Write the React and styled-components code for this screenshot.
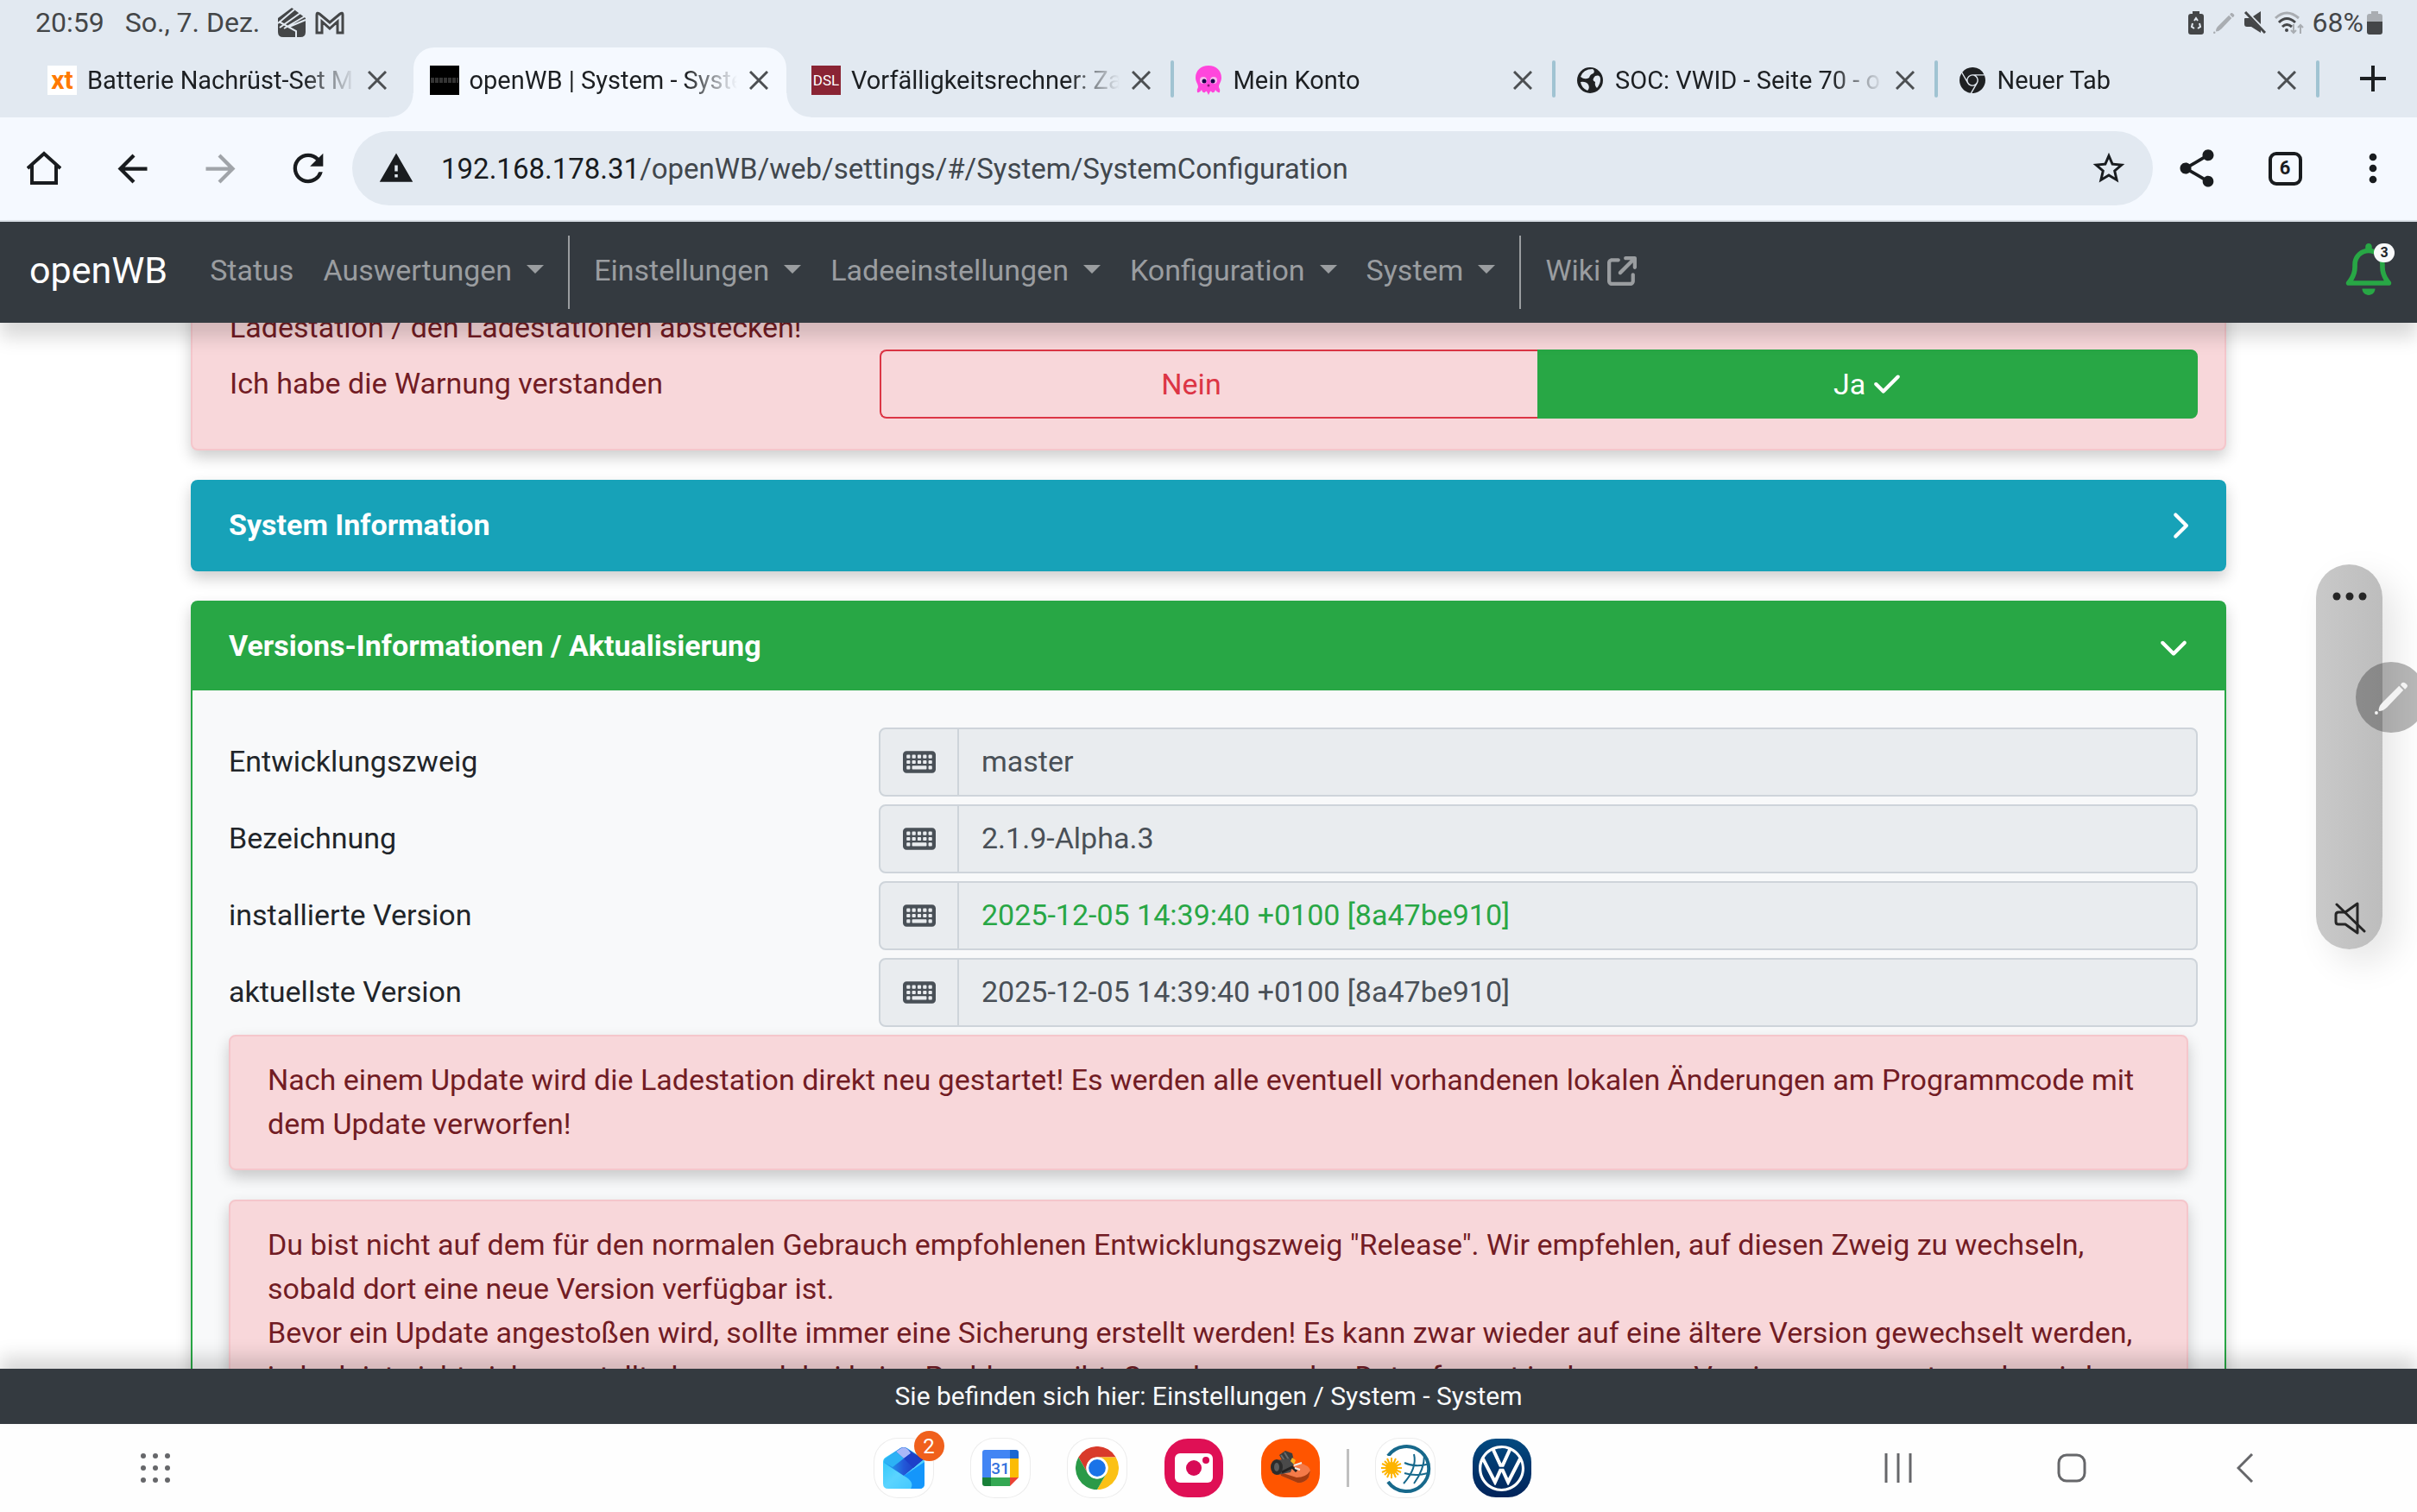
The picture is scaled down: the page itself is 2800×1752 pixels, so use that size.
import React, { useState } from "react";

import styled, { createGlobalStyle } from "styled-components";
import { MdArrowBack, MdArrowForward, MdRefresh, MdWarning, MdStarBorder, MdShare, MdMoreVert } from "react-icons/md";
import { FaCheck, FaChevronDown, FaChevronRight, FaRegBell, FaArrowUpRightFromSquare, FaKeyboard } from "react-icons/fa6";
import { SiGooglechrome, SiVolkswagen } from "react-icons/si";



const GlobalStyle = createGlobalStyle`
    * {
        box-sizing: border-box;
    }
    body {
        margin: 0;
        background: #fff;
        font-family: Roboto, "Liberation Sans", sans-serif;
        font-size: 34px;
        line-height: 51px;
        color: #212529;
    }
    button, input {
        font: inherit;
        color: inherit;
        margin: 0;
        padding: 0;
        border: none;
        background: none;
    }
    svg {
        display: block;
        flex-shrink: 0;
    }
`;

const Screen = styled.div`
    height: 100vh;
    display: flex;
    flex-direction: column;
    overflow: hidden;
`;

/* ---------- status bar ---------- */

const StatusBar = styled.div`
    height: 52px;
    padding: 0 40px 0 41px;
    display: flex;
    align-items: center;
    background: #e2e9f1;
    color: #444648;
    font-size: 32px;
`;
const StatusDate = styled.span`
    margin: 0 20px 0 24px;
`;
const StatusGroup = styled.div`
    display: flex;
    align-items: center;
    gap: 10px;
    margin-left: ${(props) => (props.$end ? "auto" : "0")};
`;
const Battery = styled.div`
    display: flex;
    align-items: center;
    gap: 4px;
`;

/* ---------- tabs ---------- */

const TabStrip = styled.div`
    height: 84px;
    padding-left: 36px;
    display: flex;
    align-items: flex-end;
    background: #e2e9f1;
`;
const Tab = styled.div`
    flex: 1 0 52px;
    min-width: 0;
    height: 81px;
    padding: 0 ${(props) => (props.$active ? "21px" : "31px")} 6px 19px;
    margin-right: ${(props) => (props.$active ? "10px" : "0")};
    flex-basis: ${(props) => (props.$active ? "42px" : "52px")};
    display: flex;
    align-items: center;
    position: relative;
    color: #1c1f22;
    background: ${(props) => (props.$active ? "#f5f9ff" : "transparent")};
    border-radius: 24px 24px 0 0;

    /* curved feet of the active tab */
    &::before, &::after {
        content: "";
        display: ${(props) => (props.$active ? "block" : "none")};
        position: absolute;
        bottom: 0;
        width: 28px;
        height: 28px;
    }
    &::before {
        left: -28px;
        background: radial-gradient(circle at 0 0, transparent 27px, #f5f9ff 28px);
    }
    &::after {
        right: -28px;
        background: radial-gradient(circle at 100% 0, transparent 27px, #f5f9ff 28px);
    }
`;
const TabTitle = styled.span`
    flex: 1;
    min-width: 0;
    margin-left: 12px;
    margin-right: 14px;
    font-size: 29px;
    line-height: 40px;
    white-space: nowrap;
    overflow: hidden;
    mask-image: linear-gradient(to right, #000 calc(100% - 60px), transparent);
`;
const TabClose = styled.button`
    display: flex;
    color: #4c4f52;
`;
const TabLine = styled.span`
    position: absolute;
    right: 4px;
    top: 15px;
    width: 4px;
    height: 43px;
    border-radius: 2px;
    background: #a0c3d2;
`;
const NewTab = styled.button`
    && {
        width: 109px;
        height: 81px;
        padding: 0 0 9px 6px;
        display: flex;
        align-items: center;
        justify-content: center;
        color: #1c1f22;
    }
`;
const Favicon = styled.span`
    width: 34px;
    height: 34px;
    flex-shrink: 0;
    display: flex;
    align-items: center;
    justify-content: center;
    overflow: hidden;
    background: ${(props) => props.$bg || "transparent"};
    color: ${(props) => props.$ink || "#222"};
    font-size: ${(props) => props.$size || "16px"};
    font-weight: ${(props) => props.$weight || 400};
    line-height: 34px;
`;

/* ---------- toolbar ---------- */

const Toolbar = styled.div`
    height: 121px;
    padding: 16px 0 17px;
    display: flex;
    background: #f5f9ff;
    border-bottom: 2px solid #dbe1e8;
`;
const ToolButton = styled.button`
    width: 102px;
    display: flex;
    align-items: center;
    justify-content: center;
    color: #191c1f;
    opacity: ${(props) => (props.disabled ? 0.38 : 1)};
`;
const Omnibox = styled.div`
    flex: 1;
    height: 86px;
    padding: 0 29px 0 30px;
    display: flex;
    align-items: center;
    border-radius: 43px;
    background: #e2e9f1;
    color: #191c1f;
`;
const Url = styled.div`
    flex: 1;
    margin-left: 31px;
    font-size: 33px;
    color: #41474d;

    b {
        font-weight: 400;
        color: #191c1f;
    }
`;
const TabCount = styled.span`
    width: 39px;
    height: 39px;
    border: 4px solid #191c1f;
    border-radius: 9px;
    display: flex;
    align-items: center;
    justify-content: center;
    font-size: 22px;
    font-weight: 700;
    line-height: 30px;
`;

/* ---------- openWB page ---------- */

const Navbar = styled.nav`
    height: 117px;
    flex-shrink: 0;
    padding: 0 26px 0 34px;
    display: flex;
    align-items: center;
    position: relative;
    z-index: 2;
    background: #343a40;
    box-shadow: 0 17px 20px rgba(0, 0, 0, 0.15);
    color: #9a9da0;
    white-space: nowrap;
`;
const Brand = styled.a`
    margin-right: 32px;
    padding-bottom: 4px;
    font-size: 43px;
    color: #fff;
    text-decoration: none;
`;
const navItem = `
    padding: 0 17px 4px;
    display: flex;
    align-items: center;
    color: #9a9da0;
    text-decoration: none;
`;
const NavLink = styled.a`
    ${navItem}
    gap: 8px;
`;
const NavDropdown = styled.button`
    && {
        ${navItem}
    }

    &::after {
        content: "";
        margin-left: 17px;
        margin-bottom: 4px;
        border-top: 10px solid;
        border-left: 10px solid transparent;
        border-right: 10px solid transparent;
    }
`;
const NavDivider = styled.span`
    width: 2px;
    height: 85px;
    margin: 0 11px;
    background: #9a9da0;
`;
const BellButton = styled.button`
    && {
        margin-left: auto;
        padding-bottom: 8px;
        position: relative;
        color: #28a745;
    }
`;
const BellBadge = styled.span`
    position: absolute;
    top: 0;
    right: 0;
    width: 24px;
    height: 22px;
    border-radius: 11px;
    background: #f8f9fa;
    color: #212529;
    font-size: 16px;
    font-weight: 700;
    line-height: 22px;
    text-align: center;
`;

const Main = styled.main`
    flex: 1;
    min-height: 0;
    overflow: hidden;
`;
/* scrolled a little, so the first card runs under the navbar */
const Container = styled.div`
    max-width: 2422px;
    margin: -47px auto 0;
    padding: 0 32px;
`;

const Alert = styled.div`
    margin-bottom: 34px;
    padding: 25px 42px 26px 43px;
    border: 2px solid #f5c6cb;
    border-radius: 8px;
    background: #f8d7da;
    color: #721c24;
    box-shadow: 0 8px 17px rgba(0, 0, 0, 0.2);
`;
const Card = styled.section`
    margin-bottom: 34px;
    border: 2px solid ${(props) => props.color};
    border-radius: 8px;
    background: #f8f9fa;
    box-shadow: 0 8px 17px rgba(0, 0, 0, 0.2);
`;
const CardHeader = styled.button`
    && {
        width: 100%;
        padding: 25px 42px 26px;
        display: flex;
        align-items: center;
        justify-content: space-between;
        background: ${(props) => props.color};
        color: #fff;
        font-weight: 700;
    }
`;
const ClosedIcon = styled(FaChevronRight)`
    width: 21px;
`;
const CardBody = styled.div`
    padding: 43px 42px;
`;

const FormRow = styled.div`
    margin: 0 -11px 9px;
    display: grid;
    grid-template-columns: 1fr 2fr;
`;
const Label = styled.label`
    padding: 14px 11px;
`;
const InputGroup = styled.div`
    height: 80px;
    display: flex;
    border: 2px solid #ced4da;
    border-radius: 8px;
    background: #e9ecef;
    color: #495057;
    overflow: hidden;
`;
const InputIcon = styled.span`
    padding: 0 25px 0 26px;
    display: flex;
    align-items: center;
    border-right: 2px solid #ced4da;
`;
const TextInput = styled.input`
    && {
        flex: 1;
        min-width: 0;
        padding: 0 26px 1px;
        color: ${(props) => (props.$ok ? "#28a745" : "#495057")};
        outline: none;
    }
`;

const ButtonGroup = styled.div`
    height: 80px;
    display: flex;
`;
const ChoiceButton = styled.button`
    && {
        flex: 1;
        display: flex;
        align-items: center;
        justify-content: center;
        gap: 8px;
        border: 2px solid ${(props) => props.color};
        background: ${(props) => (props.$checked ? props.color : "transparent")};
        color: ${(props) => (props.$checked ? "#fff" : props.color)};
    }
    &&:first-child {
        border-radius: 8px 0 0 8px;
        border-right: none;
    }
    &&:last-child {
        border-radius: 0 8px 8px 0;
    }
    /* the check keeps its room when the choice is off */
    svg {
        visibility: ${(props) => (props.$checked ? "visible" : "hidden")};
    }
`;

const Footer = styled.footer`
    height: 64px;
    flex-shrink: 0;
    position: relative;
    z-index: 2;
    background: #343a40;
    box-shadow: 0 -14px 20px rgba(0, 0, 0, 0.15);
    color: #f8f9fa;
    font-size: 30px;
    line-height: 63px;
    text-align: center;
`;

/* ---------- floating volume panel ---------- */

const VolumePanel = styled.div`
    position: absolute;
    top: 654px;
    right: 40px;
    z-index: 3;
    width: 77px;
    height: 446px;
    padding: 32px 0 16px;
    display: flex;
    flex-direction: column;
    align-items: center;
    justify-content: space-between;
    border-radius: 39px;
    background: linear-gradient(to right, #c9c9c9, #bdbdbd);
    box-shadow: 16px 16px 40px rgba(0, 0, 0, 0.1);
    color: #252525;
`;
const PenBubble = styled.button`
    && {
        position: absolute;
        top: 767px;
        right: -11px;
        z-index: 4;
        width: 82px;
        height: 82px;
        display: flex;
        align-items: center;
        justify-content: center;
        border-radius: 50%;
        background: rgba(0, 0, 0, 0.28);
    }
`;

/* ---------- taskbar ---------- */

const Taskbar = styled.div`
    height: 102px;
    flex-shrink: 0;
    padding: 0 148px 0 134px;
    display: grid;
    grid-template-columns: 1fr auto 1fr;
    align-items: center;
    background: #fefefe;
    color: #66676a;
`;
const PlainButton = styled.button`
    width: 92px;
    height: 102px;
    display: flex;
    align-items: center;
    justify-content: center;
`;
const Dock = styled.div`
    display: flex;
    align-items: center;
    gap: 44px;
`;
const AppIcon = styled.button`
    && {
        width: 68px;
        height: 68px;
        display: flex;
        align-items: center;
        justify-content: center;
        position: relative;
        border-radius: 27px;
        background: ${(props) => props.$bg || "#fff"};
        color: #fff;
        box-shadow: ${(props) => (props.$bg ? "none" : "0 0 0 1px #ececec")};
    }
`;
const AppBadge = styled.span`
    position: absolute;
    top: -9px;
    right: -13px;
    width: 35px;
    height: 35px;
    border-radius: 50%;
    background: #f0601c;
    font-size: 24px;
    line-height: 36px;
    text-align: center;
`;
const DockDivider = styled.span`
    width: 3px;
    height: 44px;
    margin: 0 -13px;
    background: #c0c0c0;
`;
const SystemButtons = styled.div`
    margin-right: 5px;
    display: flex;
    justify-content: flex-end;
    gap: 109px;
`;


function CloseIcon() {
    return (
        <svg width="22" height="22" viewBox="0 0 22 22" stroke="currentColor" strokeWidth="3">
            <path d="M1 1L21 21M21 1L1 21" />
        </svg>
    );
}

function PenIcon({ size, color }) {
    return (
        <svg width={size} height={size} viewBox="0 0 40 40" fill={color}>
            <path d="M29 6L34 11L15 31Q10 36 5 36Q4 31 9 26Z" />
            <path d="M31 4Q33 0 37 3Q41 6 37 9L36 10L31 5Z" />
            <circle cx="2" cy="38" r="2" />
        </svg>
    );
}

function GlobeIcon() {
    return (
        <svg width="30" height="30" viewBox="0 0 30 30">
            <circle cx="15" cy="15" r="15" fill="#1f2123" />
            <path d="M4 11Q9 15 14 12Q15 8 19 7Q21 4 18 2Q7 2 4 11Z" fill="#e2e9f1" />
            <path d="M21 10Q27 8 27 14Q27 19 23 24Q20 21 21 17Q16 15 21 10Z" fill="#e2e9f1" />
            <path d="M4 17Q10 16 13 20Q15 24 12 27Q5 24 4 17Z" fill="#e2e9f1" />
        </svg>
    );
}

function SquidIcon() {
    return (
        <svg width="30" height="34" viewBox="0 0 30 34">
            <path d="M15 0C24 0 30 6 30 14C30 19 27 21 27 25Q29 28 28 31Q25 32 23 28Q22 32 19 31Q18 29 17 30L15 34L13 30Q12 29 11 31Q8 32 7 28Q5 32 2 31Q1 28 3 25C3 21 0 19 0 14C0 6 6 0 15 0Z" fill="#ff46dc" />
            <circle cx="9" cy="17" r="4" fill="#f7b9ee" />
            <circle cx="21" cy="17" r="4" fill="#f7b9ee" />
            <circle cx="10" cy="18" r="2.5" fill="#180048" />
            <circle cx="20" cy="18" r="2.5" fill="#180048" />
            <circle cx="15" cy="23" r="1.5" fill="#8b1a7c" />
        </svg>
    );
}

function ChromeIcon() {
    return (
        <svg width="50" height="50" viewBox="0 0 48 48">
            <path d="M3.2 12A24 24 0 0 1 44.8 12H24A12 12 0 0 0 13.6 30Z" fill="#d93a2b" />
            <path d="M44.8 12A24 24 0 0 1 24 48L34.4 30A12 12 0 0 0 24 12Z" fill="#fbc116" />
            <path d="M24 48A24 24 0 0 1 3.2 12L13.6 30A12 12 0 0 0 34.4 30Z" fill="#2a9a48" />
            <circle cx="24" cy="24" r="12" fill="#fff" />
            <circle cx="24" cy="24" r="9.5" fill="#1a73e8" />
        </svg>
    );
}

function CalendarIcon() {
    return (
        <svg width="42" height="42" viewBox="0 0 42 42">
            <path d="M3 0H32V10H10V32H0V3Q0 0 3 0Z" fill="#4285f4" />
            <path d="M32 0H39Q42 0 42 3V10H32Z" fill="#1967d2" />
            <path d="M32 10H42V32H32Z" fill="#fbbc04" />
            <path d="M10 32H32V42H10Z" fill="#34a853" />
            <path d="M0 32H10V42H3Q0 42 0 39Z" fill="#188038" />
            <path d="M32 32H42L32 42Z" fill="#ea4335" />
            <path d="M10 10H32V32H10Z" fill="#fff" />
            <text x="21" y="28" fontSize="19" fontWeight="500" fill="#3272dd" textAnchor="middle">31</text>
        </svg>
    );
}

function MailIcon() {
    return (
        <svg width="50" height="50" viewBox="0 0 50 50">
            <defs>
                <linearGradient id="mailBody" x1="0" y1="0" x2="1" y2="1">
                    <stop offset="0" stopColor="#22c3f8" />
                    <stop offset="0.5" stopColor="#5ad4ff" />
                    <stop offset="1" stopColor="#3bc4ff" />
                </linearGradient>
                <linearGradient id="mailFlap" x1="0" y1="0" x2="1" y2="0">
                    <stop offset="0" stopColor="#22b4f6" />
                    <stop offset="0.5" stopColor="#2258d8" />
                    <stop offset="1" stopColor="#1a2fb4" />
                </linearGradient>
            </defs>
            <path d="M1 18Q1 14 5 12L21 2Q25 0 29 2L45 12Q49 14 49 18V43Q49 49 43 49H7Q1 49 1 43Z" fill="url(#mailBody)" />
            <path d="M3 15L21 2Q26 -1 31 4L48 15L25 34L2 19Z" fill="url(#mailFlap)" />
            <path d="M16 6L22 2Q28 -1 33 8L25 14Z" fill="#a9b8f8" />
            <path d="M3 15L16 6L25 14L12 24L2 18Z" fill="#2cb2f5" />
            <path d="M33 8L46 16L36 25L25 14Z" fill="#1d3fc8" />
            <path d="M25 34L49 18V43Q49 49 43 49H33Q38 41 25 34Z" fill="#1496fb" />
        </svg>
    );
}

function CameraIcon() {
    return (
        <svg width="44" height="34" viewBox="0 0 44 34">
            <rect width="44" height="34" rx="6" fill="#fff" />
            <circle cx="22" cy="17" r="9" fill="#d80a56" />
            <circle cx="36" cy="8" r="4" fill="#d80a56" />
        </svg>
    );
}

function CompressorIcon() {
    return (
        <svg width="48" height="40" viewBox="0 0 48 40">
            <path d="M12 24L34 14Q46 17 47 23L45 31Q40 38 32 37L13 29Z" fill="#f47a48" />
            <path d="M32 37Q40 38 45 31L47 23Q42 31 31 31L12 25L13 29Z" fill="#a53c10" />
            <path d="M11 5L18 0L26 3L28 12L17 16Z" fill="#3c3c3c" />
            <path d="M13 5L19 14M17 2L23 12" stroke="#6a6a6a" strokeWidth="2" />
            <path d="M8 11L22 9L28 15L24 25L9 28Z" fill="#4a4a4a" />
            <ellipse cx="8" cy="19" rx="7" ry="9" fill="#2c2c2c" />
            <ellipse cx="8" cy="19" rx="3" ry="5" fill="#5c5c5c" />
            <path d="M26 8L30 11L28 16L24 12Z" fill="#f5b021" />
            <path d="M14 25L26 19L31 24" stroke="#222" strokeWidth="3" fill="none" />
            <path d="M28 17L37 14M29 20L35 22" stroke="#eee" strokeWidth="2" />
        </svg>
    );
}

function WeatherIcon() {
    return (
        <svg width="64" height="60" viewBox="0 0 64 60" fill="none">
            <path d="M12 16A26 26 0 1 1 12 46" stroke="#17698c" strokeWidth="4" />
            <path d="M31 24Q44 30 60 25M31 36Q44 40 58 36M42 14Q46 30 30 48M54 15Q54 32 42 48" stroke="#17698c" strokeWidth="2" />
            <path d="M2 16H16Q29 18 29 31Q28 45 14 45H2Z" fill="#fff" />
            <circle cx="16" cy="30" r="7" fill="#fdb400" />
            <path d="M16 18V42M4 30H28M8 22L24 38M24 22L8 38M11 19L21 41M21 19L11 41M5 25L27 35M27 25L5 35" stroke="#fdb400" strokeWidth="2" />
        </svg>
    );
}


const tabs = [
    { title: "Batterie Nachrüst-Set M", icon: <Favicon $bg="#fff" $ink="#ff7a00" $size="30px" $weight="700">xt</Favicon> },
    {
        title: "openWB | System - Syste",
        active: true,
        icon: (
            <Favicon $bg="#000">
                <svg width="34" height="34" viewBox="0 0 34 34">
                    <path d="M1 17H33" stroke="#4a4a4a" strokeWidth="6" strokeDasharray="4 1" opacity="0.7" />
                </svg>
            </Favicon>
        ),
    },
    { title: "Vorfälligkeitsrechner: Za", icon: <Favicon $bg="#8a2434" $ink="#fff" $size="17px">DSL</Favicon>, line: true },
    { title: "Mein Konto", icon: <Favicon><SquidIcon /></Favicon>, line: true },
    { title: "SOC: VWID - Seite 70 - o", icon: <Favicon><GlobeIcon /></Favicon>, line: true },
    { title: "Neuer Tab", icon: <Favicon><SiGooglechrome size={30} color="#1f2123" /></Favicon>, line: true },
];

const versions = [
    { id: "branch", label: "Entwicklungszweig", value: "master" },
    { id: "name", label: "Bezeichnung", value: "2.1.9-Alpha.3" },
    { id: "installed", label: "installierte Version", value: "2025-12-05 14:39:40 +0100 [8a47be910]", ok: true },
    { id: "latest", label: "aktuellste Version", value: "2025-12-05 14:39:40 +0100 [8a47be910]" },
];


function SystemStatus() {
    return (
        <StatusBar>
            <span>20:59</span>
            <StatusDate>So., 7. Dez.</StatusDate>
            <StatusGroup>
                <svg width="34" height="34" viewBox="0 0 34 34">
                    <path d="M17 0L33 12V28Q33 34 27 34H7Q1 34 1 28V12Z" fill="#444648" />
                    <path d="M1 18L20 2M3 23L27 6M8 24L32 10M2 16L22 27V34M14 22L33 14" stroke="#e2e9f1" strokeWidth="2" fill="none" />
                </svg>
                <svg width="34" height="27" viewBox="0 0 34 27" fill="none" stroke="#444648" strokeWidth="3">
                    <path d="M2 25V4Q2 1 5 3L17 13L29 3Q32 1 32 4V25H26V12L17 20L8 12V25Z" />
                </svg>
            </StatusGroup>
            <StatusGroup $end>
                <svg width="20" height="27" viewBox="0 0 20 27">
                    <path d="M6 0H14V3H16Q19 3 19 6V24Q19 27 16 27H4Q1 27 1 24V6Q1 3 4 3H6Z" fill="#444648" />
                    <path d="M8 11L10 8L12 11M14 14L15 18L12 20M8 20L5 18L6 14" stroke="#e2e9f1" strokeWidth="2" fill="none" />
                </svg>
                <PenIcon size={25} color="#a9adb2" />
                <svg width="26" height="26" viewBox="0 0 26 26" fill="#444648">
                    <path d="M1 9Q1 8 2 8H7L20 21V25L9 18H4Q1 18 1 15ZM11 6L20 0V15Z" />
                    <path d="M2 1L25 25" stroke="#444648" strokeWidth="3" />
                </svg>
                <svg width="34" height="27" viewBox="0 0 34 27" fill="none" strokeWidth="3">
                    <path d="M1 8Q14 -4 28 8" stroke="#a9adb2" />
                    <path d="M5 13Q14 4 24 13M9 18Q14 13 20 18" stroke="#444648" />
                    <circle cx="14" cy="22" r="2" fill="#444648" />
                    <path d="M22 15V25M19 22L22 25L25 22M30 26V16M27 19L30 16L33 19" stroke="#a9adb2" strokeWidth="2" />
                </svg>
                <Battery>
                    <span>68%</span>
                    <svg width="18" height="27" viewBox="0 0 18 27">
                        <path d="M5 0H13V3H15Q18 3 18 6V12H0V6Q0 3 3 3H5Z" fill="#a9adb2" />
                        <path d="M0 12H18V24Q18 27 15 27H3Q0 27 0 24Z" fill="#444648" />
                    </svg>
                </Battery>
            </StatusGroup>
        </StatusBar>
    );
}

function Browser() {
    return (
        <>
            <TabStrip>
                {tabs.map((tab) => (
                    <Tab key={tab.title} $active={tab.active}>
                        {tab.icon}
                        <TabTitle>{tab.title}</TabTitle>
                        <TabClose aria-label="Tab schließen"><CloseIcon /></TabClose>
                        {tab.line && <TabLine />}
                    </Tab>
                ))}
                <NewTab aria-label="Neuer Tab">
                    <svg width="30" height="30" viewBox="0 0 30 30" stroke="currentColor" strokeWidth="4">
                        <path d="M15 0V30M0 15H30" />
                    </svg>
                </NewTab>
            </TabStrip>
            <Toolbar>
                <ToolButton aria-label="Startseite">
                    <svg width="40" height="40" viewBox="0 0 40 40" fill="none" stroke="currentColor" strokeWidth="4">
                        <path d="M1 20L20 3L39 20M6 16V37H34V16" />
                    </svg>
                </ToolButton>
                <ToolButton aria-label="Zurück"><MdArrowBack size={51} /></ToolButton>
                <ToolButton aria-label="Vorwärts" disabled><MdArrowForward size={51} /></ToolButton>
                <ToolButton aria-label="Neu laden"><MdRefresh size={52} /></ToolButton>
                <Omnibox>
                    <MdWarning size={42} />
                    <Url><b>192.168.178.31</b>/openWB/web/settings/#/System/SystemConfiguration</Url>
                    <MdStarBorder size={44} />
                </Omnibox>
                <ToolButton aria-label="Teilen"><MdShare size={52} /></ToolButton>
                <ToolButton aria-label="Tabs"><TabCount>6</TabCount></ToolButton>
                <ToolButton aria-label="Menü"><MdMoreVert size={52} /></ToolButton>
            </Toolbar>
        </>
    );
}

function TopNav() {
    return (
        <Navbar>
            <Brand href="#">openWB</Brand>
            <NavLink href="#">Status</NavLink>
            <NavDropdown>Auswertungen</NavDropdown>
            <NavDivider />
            <NavDropdown>Einstellungen</NavDropdown>
            <NavDropdown>Ladeeinstellungen</NavDropdown>
            <NavDropdown>Konfiguration</NavDropdown>
            <NavDropdown>System</NavDropdown>
            <NavDivider />
            <NavLink href="#">Wiki <FaArrowUpRightFromSquare size={34} /></NavLink>
            <BellButton aria-label="Meldungen">
                <FaRegBell size={60} />
                <BellBadge>3</BellBadge>
            </BellButton>
        </Navbar>
    );
}

function SystemSettings() {
    const [understood, setUnderstood] = useState(true);

    return (
        <Main>
            <Container>
                <Alert>
                    Ladestation / den Ladestationen abstecken!
                    <FormRow>
                        <Label as="span" id="warning">Ich habe die Warnung verstanden</Label>
                        <ButtonGroup role="group" aria-labelledby="warning">
                            <ChoiceButton color="#dc3545" $checked={!understood} onClick={() => setUnderstood(false)}>
                                Nein <FaCheck />
                            </ChoiceButton>
                            <ChoiceButton color="#28a745" $checked={understood} onClick={() => setUnderstood(true)}>
                                Ja <FaCheck />
                            </ChoiceButton>
                        </ButtonGroup>
                    </FormRow>
                </Alert>

                <Card color="#17a2b8">
                    <CardHeader color="#17a2b8">System Information <ClosedIcon size={34} /></CardHeader>
                </Card>

                <Card color="#28a745">
                    <CardHeader color="#28a745">Versions-Informationen / Aktualisierung <FaChevronDown size={34} /></CardHeader>
                    <CardBody>
                        {versions.map((item) => (
                            <FormRow key={item.id}>
                                <Label htmlFor={item.id}>{item.label}</Label>
                                <InputGroup>
                                    <InputIcon><FaKeyboard size={38} /></InputIcon>
                                    <TextInput id={item.id} value={item.value} $ok={item.ok} readOnly />
                                </InputGroup>
                            </FormRow>
                        ))}
                        <Alert>
                            Nach einem Update wird die Ladestation direkt neu gestartet! Es werden alle eventuell
                            vorhandenen lokalen Änderungen am Programmcode mit dem Update verworfen!
                        </Alert>
                        <Alert>
                            Du bist nicht auf dem für den normalen Gebrauch empfohlenen Entwicklungszweig "Release". Wir
                            empfehlen, auf diesen Zweig zu wechseln, sobald dort eine neue Version verfügbar ist.
                            <br />
                            Bevor ein Update angestoßen wird, sollte immer eine Sicherung erstellt werden! Es kann zwar
                            wieder auf eine ältere Version gewechselt werden, jedoch ist nicht sichergestellt, dass es
                            dabei keine Probleme gibt. Gerade wenn das Datenformat in der neuen Version angepasst wurde, wird
                        </Alert>
                    </CardBody>
                </Card>
            </Container>
        </Main>
    );
}

function SystemTaskbar() {
    return (
        <Taskbar>
            <PlainButton aria-label="Alle Apps">
                <svg width="34" height="34" viewBox="0 0 34 34" fill="currentColor">
                    {[3, 17, 31].map((y) => [3, 17, 31].map((x) => <circle key={x + "-" + y} cx={x} cy={y} r="3" />))}
                </svg>
            </PlainButton>
            <Dock>
                <AppIcon aria-label="Mail"><MailIcon /><AppBadge>2</AppBadge></AppIcon>
                <AppIcon aria-label="Kalender"><CalendarIcon /></AppIcon>
                <AppIcon aria-label="Chrome"><ChromeIcon /></AppIcon>
                <AppIcon aria-label="Kamera" $bg="#df1055"><CameraIcon /></AppIcon>
                <AppIcon aria-label="Kompressor" $bg="#ff5500"><CompressorIcon /></AppIcon>
                <DockDivider />
                <AppIcon aria-label="Wetter"><WeatherIcon /></AppIcon>
                <AppIcon aria-label="Volkswagen" $bg="linear-gradient(#024a80, #02235a)"><SiVolkswagen size={53} /></AppIcon>
            </Dock>
            <SystemButtons>
                <PlainButton aria-label="Letzte Apps">
                    <svg width="34" height="34" viewBox="0 0 34 34" stroke="currentColor" strokeWidth="3">
                        <path d="M3 0V34M17 0V34M31 0V34" />
                    </svg>
                </PlainButton>
                <PlainButton aria-label="Home">
                    <svg width="34" height="34" viewBox="0 0 34 34" fill="none" stroke="currentColor" strokeWidth="3">
                        <rect x="2" y="2" width="30" height="30" rx="9" />
                    </svg>
                </PlainButton>
                <PlainButton aria-label="Zurück">
                    <svg width="20" height="34" viewBox="0 0 20 34" fill="none" stroke="currentColor" strokeWidth="3">
                        <path d="M18 1L2 17L18 33" />
                    </svg>
                </PlainButton>
            </SystemButtons>
        </Taskbar>
    );
}

function App() {
    return (
        <Screen>
            <GlobalStyle />
            <SystemStatus />
            <Browser />
            <TopNav />
            <SystemSettings />
            <Footer>Sie befinden sich hier: Einstellungen / System - System</Footer>
            <SystemTaskbar />

            <VolumePanel>
                <svg width="40" height="10" viewBox="0 0 40 10" fill="currentColor">
                    <circle cx="5" cy="5" r="4.5" />
                    <circle cx="20" cy="5" r="4.5" />
                    <circle cx="35" cy="5" r="4.5" />
                </svg>
                <svg width="38" height="40" viewBox="0 0 38 40" fill="none" stroke="currentColor" strokeWidth="3" strokeLinejoin="round">
                    <path d="M28 3V37L14 27H6Q3 27 3 24V16Q3 13 6 13H14Z" />
                    <path d="M4 4L36 35" strokeLinecap="round" />
                </svg>
            </VolumePanel>
            <PenBubble aria-label="Stift">
                <PenIcon size={39} color="#f3f3f3" />
            </PenBubble>
        </Screen>
    );
}

export default App;
